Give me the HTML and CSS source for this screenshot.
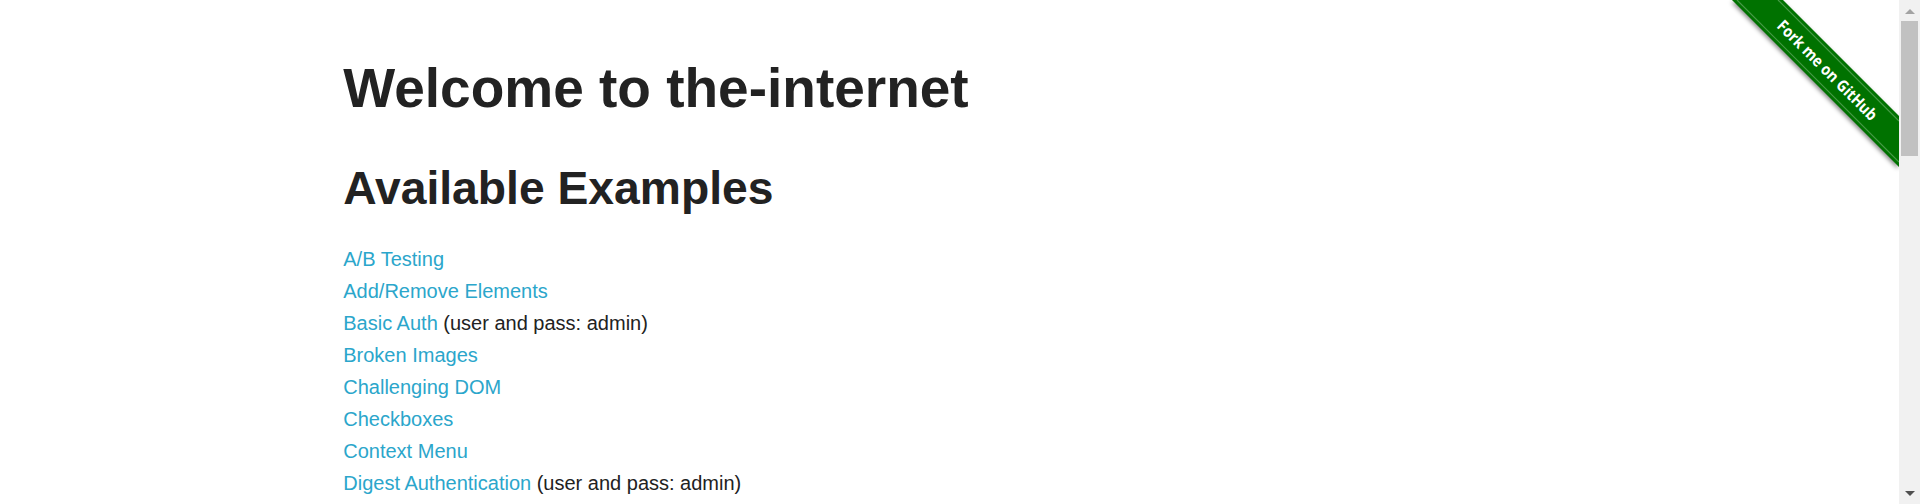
FILE: index.html
```html
<!DOCTYPE html>
<html lang="en">
<head>
<meta charset="utf-8">
<title>The Internet</title>
<link rel="stylesheet" href="styles.css">
</head>
<body>
<div class="page">
  <main class="main">
    <a class="forkme" href="#" aria-label="Fork me on GitHub">
      <svg class="forkme-svg" width="186" height="186" viewBox="0 0 186 186">
        <polygon class="ribbon-band" points="19,0 70,0 186,116 186,167"/>
        <line class="ribbon-stitch" x1="65" y1="0" x2="186" y2="121"/>
        <line class="ribbon-stitch" x1="24" y1="0" x2="186" y2="162"/>
        <text class="ribbon-text" x="114.5" y="70" textLength="134" lengthAdjust="spacingAndGlyphs" transform="rotate(45 114.5 70)">Fork me on GitHub</text>
      </svg>
    </a>
    <div class="row">
      <div id="content" class="content">
        <h1 class="heading">Welcome to the-internet</h1>
        <h2 class="subheading">Available Examples</h2>
        <ul class="examples">
          <li><a href="#">A/B Testing</a></li>
          <li><a href="#">Add/Remove Elements</a></li>
          <li><a href="#">Basic Auth</a> (user and pass: admin)</li>
          <li><a href="#">Broken Images</a></li>
          <li><a href="#">Challenging DOM</a></li>
          <li><a href="#">Checkboxes</a></li>
          <li><a href="#">Context Menu</a></li>
          <li><a href="#">Digest Authentication</a> (user and pass: admin)</li>
        </ul>
      </div>
    </div>
  </main>
  <div class="scrollbar" aria-hidden="true">
    <div class="sb-button"><span class="sb-arrow-up"></span></div>
    <div class="sb-track"><div class="sb-thumb"></div></div>
    <div class="sb-button"><span class="sb-arrow-down"></span></div>
  </div>
</div>
</body>
</html>
```
FILE: styles.css
```css
html, body {
  margin: 0;
  padding: 0;
}
body {
  font-family: "Liberation Sans", Helvetica, Arial, sans-serif;
  font-size: 20px;
  line-height: 1.6;
  color: #222222;
  background: #ffffff;
}
a {
  color: #2ba6cb;
  text-decoration: none;
}
.page {
  display: flex;
  height: 504px;
  overflow: hidden;
}
.main {
  flex: 1;
  position: relative;
  overflow: hidden;
}
.row {
  max-width: 1250px;
  margin: 0 auto;
}
.content {
  padding: 54px 18.75px 0;
}
.heading {
  font-size: 55px;
  line-height: 1.25;
  font-weight: bold;
  margin: 0 0 37px;
  color: #222222;
}
.subheading {
  font-size: 46.25px;
  line-height: 1.25;
  font-weight: bold;
  margin: 0 0 25px;
  color: #222222;
}
.examples {
  list-style: none;
  margin: 0;
  padding: 0;
}
.examples li {
  line-height: 32px;
}

/* GitHub ribbon */
.forkme {
  position: absolute;
  top: 0;
  right: 0;
  display: block;
  width: 186px;
  height: 186px;
}
.forkme-svg {
  display: block;
}
.ribbon-band {
  fill: #007200;
  filter: drop-shadow(-1px 2px 2px rgba(0, 0, 0, 0.45));
}
.ribbon-stitch {
  stroke: #4f9f4f;
  stroke-width: 1.2;
  opacity: 0.9;
}
.ribbon-text {
  fill: #ffffff;
  font-family: "Open Sans", "DejaVu Sans", sans-serif;
  font-weight: bold;
  font-size: 16px;
  text-anchor: middle;
  dominant-baseline: central;
}

/* Scrollbar */
.scrollbar {
  flex: none;
  width: 21px;
  display: flex;
  flex-direction: column;
  background: #f1f1f1;
}
.sb-button {
  flex: none;
  height: 21px;
  display: flex;
  align-items: center;
  justify-content: center;
}
.sb-arrow-up {
  width: 0;
  height: 0;
  border-left: 5px solid transparent;
  border-right: 5px solid transparent;
  border-bottom: 5px solid #a3a3a3;
  margin-top: 1px;
}
.sb-arrow-down {
  width: 0;
  height: 0;
  border-left: 5px solid transparent;
  border-right: 5px solid transparent;
  border-top: 5px solid #505050;
  margin-bottom: 1px;
}
.sb-track {
  flex: 1;
  padding: 0 2px;
}
.sb-thumb {
  height: 135px;
  background: #c1c1c1;
}
```
